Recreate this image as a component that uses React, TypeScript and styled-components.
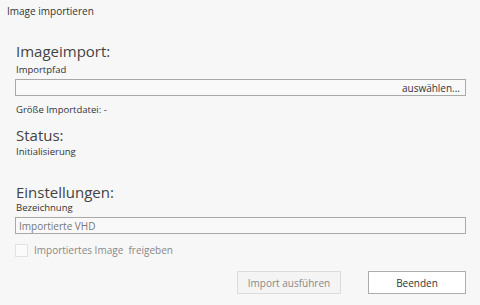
import React from "react";
import styled, { createGlobalStyle } from "styled-components";

const Global = createGlobalStyle`
  html, body { margin: 0; padding: 0; background: #f7f7f7; }
  body { font-family: "Open Sans", "Noto Sans", sans-serif; color: #333; }
`;

const Window = styled.div`
  width: 480px;
  height: 305px;
  background: #f7f7f7;
  display: flex;
  flex-direction: column;
  box-sizing: border-box;
`;

const Title = styled.div`
  font-size: 10px;
  line-height: 15px;
  padding: 4px 0 0 7px;
  color: #333;
`;

const Body = styled.div`
  display: flex;
  flex-direction: column;
  padding: 0 14px 0 15px;
`;

const Heading = styled.div<{ $top: number }>`
  font-size: 15px;
  line-height: 20px;
  color: #444;
  margin-top: ${(p) => p.$top}px;
  padding-left: 1px;
`;

const Label = styled.div<{ $top?: number }>`
  font-size: 9.5px;
  line-height: 13px;
  color: #333;
  margin-top: ${(p) => p.$top ?? 0}px;
  padding-left: 1px;
`;

const Field = styled.div<{ $top: number; $align?: string; $muted?: boolean }>`
  height: 17px;
  box-sizing: border-box;
  border: 1px solid #a9a9a9;
  background: #f9f9f9;
  margin-top: ${(p) => p.$top}px;
  display: flex;
  align-items: center;
  justify-content: ${(p) => p.$align ?? "flex-start"};
  padding: 0 5px 0 3px;
  font-size: 10px;
  color: ${(p) => (p.$muted ? "#777" : "#333")};
`;

const CheckRow = styled.label`
  display: flex;
  align-items: center;
  gap: 6px;
  margin-top: 9px;
  font-size: 10px;
  color: #888;
`;

const Box = styled.span`
  width: 13px;
  height: 13px;
  box-sizing: border-box;
  border: 1px solid #e2e2e2;
  background: #fbfbfb;
`;

const Buttons = styled.div`
  display: flex;
  justify-content: flex-end;
  gap: 27px;
  margin-top: 14px;
`;

const Button = styled.button<{ $disabled?: boolean }>`
  height: 23px;
  width: ${(p) => (p.$disabled ? 104 : 98)}px;
  box-sizing: border-box;
  font-family: inherit;
  font-size: 10px;
  padding: 0;
  border: 1px solid ${(p) => (p.$disabled ? "#dcdcdc" : "#adadad")};
  background: ${(p) => (p.$disabled ? "#f4f4f4" : "#ffffff")};
  color: ${(p) => (p.$disabled ? "#888" : "#333")};
`;

export default function App() {
  return (
    <Window>
      <Global />
      <Title>Image importieren</Title>
      <Body>
        <Heading $top={22}>Imageimport:</Heading>
        <Label $top={2}>Importpfad</Label>
        <Field $top={3} $align="flex-end">auswählen...</Field>
        <Label $top={7}>Größe Importdatei: -</Label>
        <Heading $top={9}>Status:</Heading>
        <Label $top={0}>Initialisierung</Label>
        <Heading $top={24}>Einstellungen:</Heading>
        <Label $top={-1}>Bezeichnung</Label>
        <Field $top={3} $muted>Importierte VHD</Field>
        <CheckRow>
          <Box />
          Importiertes Image&nbsp; freigeben
        </CheckRow>
        <Buttons>
          <Button $disabled disabled>Import ausführen</Button>
          <Button>Beenden</Button>
        </Buttons>
      </Body>
    </Window>
  );
}
